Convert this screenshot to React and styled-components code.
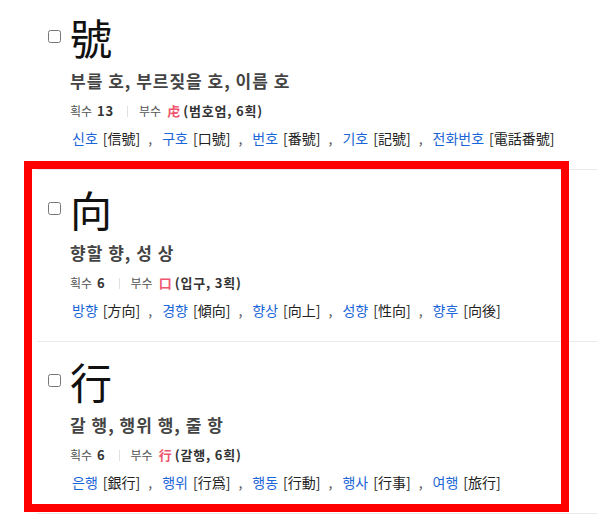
import React from "react";
import styled, {createGlobalStyle} from "styled-components";

const items = [
    {
        hanja: '號',
        meaning: '부를 호, 부르짖을 호, 이름 호',
        strokes: 13,
        radical: '虍',
        radicalName: '범호엄, 6획',
        words: [['신호', '信號'], ['구호', '口號'], ['번호', '番號'], ['기호', '記號'], ['전화번호', '電話番號']],
    },
    {
        hanja: '向',
        meaning: '향할 향, 성 상',
        strokes: 6,
        radical: '口',
        radicalName: '입구, 3획',
        words: [['방향', '方向'], ['경향', '傾向'], ['향상', '向上'], ['성향', '性向'], ['향후', '向後']],
    },
    {
        hanja: '行',
        meaning: '갈 행, 행위 행, 줄 항',
        strokes: 6,
        radical: '行',
        radicalName: '갈행, 6획',
        words: [['은행', '銀行'], ['행위', '行爲'], ['행동', '行動'], ['행사', '行事'], ['여행', '旅行']],
    },
];

const HanjaItem = ({item}) => (
    <Item>
        <Check type="checkbox"/>
        <Body>
            <Hanja>{item.hanja}</Hanja>
            <Meaning>{item.meaning}</Meaning>
            <Meta>
                <Label>획수</Label>
                <Strong>{item.strokes}</Strong>
                <Divider/>
                <Label>부수</Label>
                <Radical>{item.radical}</Radical>
                <Strong>({item.radicalName})</Strong>
            </Meta>
            <Words>
                {item.words.map(([word, hanja], index) => (
                    <React.Fragment key={word}>
                        {index > 0 && <Comma>,</Comma>}
                        <WordLink href="#">{word}</WordLink>
                        <WordHanja>[{hanja}]</WordHanja>
                    </React.Fragment>
                ))}
            </Words>
        </Body>
    </Item>
)

const App = () => {
    return (
        <>
            <GlobalStyle/>
            <List>
                <HanjaItem item={items[0]}/>
                <Group>
                    <HanjaItem item={items[1]}/>
                    <HanjaItem item={items[2]}/>
                    <Highlight/>
                </Group>
            </List>
        </>
    )
}

const GlobalStyle = createGlobalStyle`
  html, body {
    margin: 0;
    padding: 0;
    background: #fff;
  }
  body {
    font-family: "Noto Sans CJK KR", "Noto Sans", sans-serif;
    color: #222;
    overflow: hidden;
  }
`
const List = styled.div`
  margin-top: -2px;
  padding-left: 37px;
`
const Group = styled.div`
  position: relative;
`
const Highlight = styled.div`
  position: absolute;
  top: -9px;
  left: -13px;
  right: 28px;
  bottom: 2px;
  border: 8px solid #ff0000;
  pointer-events: none;
`
const Item = styled.div`
  display: flex;
  align-items: flex-start;
  height: 172px;
  box-sizing: border-box;
  padding: 14px 0 0 11px;
  border-bottom: 1px solid #e9e9e9;
`
const Check = styled.input`
  width: 13px;
  height: 13px;
  margin: 18px 9px 0 0;
  flex-shrink: 0;
`
const Body = styled.div`
  display: flex;
  flex-direction: column;
`
const Hanja = styled.div`
  font-size: 42px;
  line-height: 50px;
  color: #111;
`
const Meaning = styled.div`
  margin-top: 7px;
  font-size: 17px;
  line-height: 24px;
  font-weight: bold;
  color: #444;
  letter-spacing: 1px;
`
const Meta = styled.div`
  display: flex;
  align-items: center;
  margin-top: 8px;
  font-size: 12px;
  line-height: 20px;
  color: #555;
`
const Label = styled.span`
  margin-right: 5px;
`
const Strong = styled.span`
  font-size: 13px;
  font-weight: bold;
  color: #333;
  letter-spacing: 0.8px;
`
const Divider = styled.span`
  width: 1px;
  height: 11px;
  background: #e0e0e0;
  margin: 0 11px 0 13px;
`
const Radical = styled.span`
  font-size: 13px;
  font-weight: bold;
  color: #f0566d;
  margin: 0 3px 0 1px;
`
const Words = styled.div`
  margin-top: 6px;
  font-size: 14px;
  line-height: 22px;
  color: #222;
  white-space: nowrap;
`
const WordLink = styled.a`
  color: #1b66d6;
  text-decoration: none;
  margin-left: 2px;
`
const WordHanja = styled.span`
  margin-left: 5px;
  color: #222;
`
const Comma = styled.span`
  color: #555;
  margin: 0 8px 0 8px;
`

export default App
